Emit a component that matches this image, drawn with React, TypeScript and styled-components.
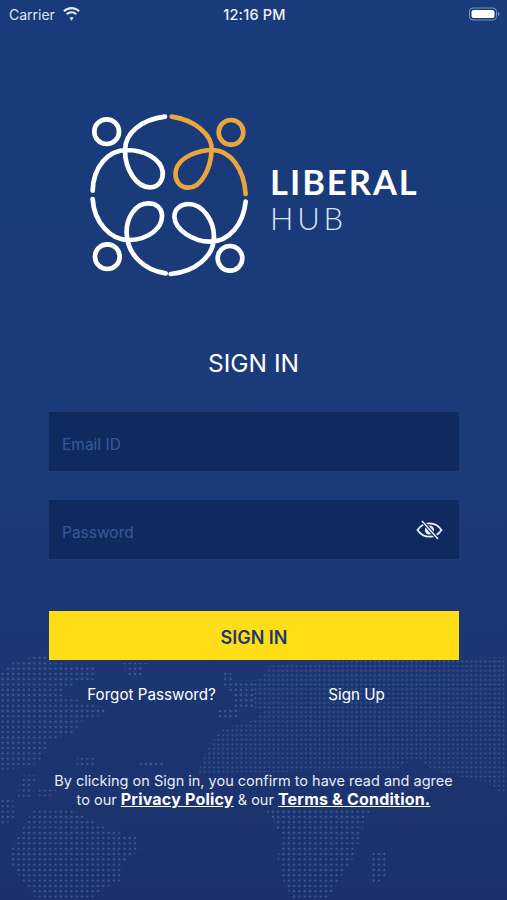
import React from 'react';
import styled, { createGlobalStyle } from 'styled-components';

const GlobalStyle = createGlobalStyle`
  html, body {
    margin: 0;
    padding: 0;
    background: #1b3672;
  }
  * {
    box-sizing: border-box;
  }
`;

const Screen = styled.div`
  position: relative;
  width: 507px;
  height: 900px;
  overflow: hidden;
  background: linear-gradient(180deg, #193b7b 0%, #1b3a78 55%, #1c316b 100%);
  font-family: Inter, 'Liberation Sans', sans-serif;
  color: #ffffff;
`;

const MapBackdrop = styled.svg`
  position: absolute;
  left: 0;
  bottom: 0;
  width: 507px;
  height: 250px;
`;

const Content = styled.div`
  position: relative;
  display: flex;
  flex-direction: column;
  height: 100%;
`;

const StatusBar = styled.div`
  display: grid;
  grid-template-columns: 1fr auto 1fr;
  align-items: center;
  height: 28px;
  padding: 0 7px 0 9px;
  font-size: 14px;
  color: #dfe6f2;
`;

const Carrier = styled.div`
  display: flex;
  align-items: center;
  gap: 7px;
`;

const Clock = styled.div`
  font-size: 14.5px;
  font-weight: 500;
  letter-spacing: 0.2px;
  color: #eef2f8;
`;

const BatteryWrap = styled.div`
  display: flex;
  justify-content: flex-end;
`;

const LogoRow = styled.div`
  display: flex;
  align-items: center;
  margin: 72px 0 0 70px;
  height: 190px;
`;

const Wordmark = styled.div`
  display: flex;
  flex-direction: column;
  padding-top: 10px;
  font-family: Lato, 'Open Sans', sans-serif;
`;

const WordmarkTop = styled.div`
  font-size: 34.5px;
  line-height: 36px;
  font-weight: 700;
  letter-spacing: 2px;
`;

const WordmarkBottom = styled.div`
  font-size: 31px;
  line-height: 36px;
  font-weight: 300;
  letter-spacing: 3.8px;
  color: #dce5f3;
`;

const Title = styled.h1`
  margin: 58px 0 0;
  font-size: 24.5px;
  line-height: 30px;
  font-weight: 400;
  text-align: center;
`;

const Form = styled.form`
  display: flex;
  flex-direction: column;
  margin: 34px 48px 0 49px;
`;

const FieldBox = styled.div<{ $gap?: number }>`
  display: flex;
  align-items: center;
  height: 59px;
  margin-top: ${({ $gap }) => $gap ?? 0}px;
  padding: 0 16px 0 13px;
  background: #0f2a5f;
`;

const FieldInput = styled.input`
  flex: 1;
  min-width: 0;
  border: 0;
  outline: 0;
  padding: 6px 0 0;
  background: transparent;
  font-family: inherit;
  font-size: 15.5px;
  color: #ffffff;

  &::placeholder {
    color: #365a9b;
    opacity: 1;
  }
`;

const SubmitButton = styled.button`
  height: 49px;
  margin-top: 52px;
  border: 0;
  padding: 3px 0 0;
  background: #ffde17;
  font-family: inherit;
  font-size: 18px;
  font-weight: 600;
  color: #1c3870;
`;

const LinkRow = styled.div`
  display: grid;
  grid-template-columns: 1fr 1fr;
  margin-top: 24px;
  font-size: 15.2px;
  line-height: 22px;
  text-align: center;
`;

const Legal = styled.p`
  margin: 66px 0 0;
  font-size: 14.5px;
  line-height: 18px;
  text-align: center;
  color: #e6ebf4;
`;

const LegalLink = styled.a`
  font-size: 16px;
  font-weight: 700;
  letter-spacing: 0.2px;
  color: #ffffff;
  text-decoration: underline;
`;

const LOOP_PATHS = [
  'M285 50C215 58 165 100 165 150C165 210 200 262 240 262C270 262 280 235 278 215C272 175 220 150 170 150C115 150 70 200 68 272',
  'M68 297C72 365 120 422 180 420C235 418 278 385 276 345C274 320 255 310 235 310C195 310 168 355 170 400C172 465 225 512 287 520',
  'M527 305C520 370 480 425 420 425C370 425 315 390 313 350C313 325 335 312 355 312C400 312 432 365 432 410C432 470 375 515 302 522',
];

const HEAD_CIRCLES = [
  { x: 110, y: 95 },
  { x: 112, y: 470 },
  { x: 480, y: 475 },
];

const Logo = () => (
  <svg width="200" height="190" viewBox="0 0 600 570" fill="none" strokeWidth="14" strokeLinecap="round">
    {LOOP_PATHS.map((d) => (
      <path key={d} d={d} stroke="#ffffff" />
    ))}
    {HEAD_CIRCLES.map((c) => (
      <circle key={c.x} cx={c.x} cy={c.y} r="37" stroke="#ffffff" />
    ))}
    <path
      d="M305 50C375 60 428 105 425 150C422 205 395 263 355 263C325 263 312 235 318 210C328 170 385 150 430 150C480 152 522 205 527 282"
      stroke="#eaa63c"
    />
    <circle cx="483" cy="97" r="37" stroke="#eaa63c" />
  </svg>
);

const WifiIcon = () => (
  <svg width="19" height="14" viewBox="0 0 19 14" fill="#e6ebf4">
    <path d="M9.5 2.2c2.6 0 5 1 6.9 2.8l1.4-1.5A12 12 0 0 0 9.5 0 12 12 0 0 0 1.2 3.500L2.600 5A10 10 0 0 1 9.500 2.200z" />
    <path d="M9.500 6.300c1.500 0 2.900.6 4 1.600l1.500-1.500a8 8 0 0 0-11 0l1.500 1.500a5.800 5.800 0 0 1 4-1.600z" />
    <path d="M9.500 10c-.8 0-1.500.3-2 .8l2 2.900 2-2.900c-.5-.5-1.200-.8-2-.8z" />
  </svg>
);

const BatteryIcon = () => (
  <svg width="31" height="14" viewBox="0 0 31 14" fill="none">
    <rect x="0.500" y="1" width="27" height="12" rx="3.500" stroke="#7f93b8" />
    <rect x="2.500" y="3" width="23" height="8" rx="2" fill="#ffffff" />
    <path d="M29 5v4c.9-.3 1.500-1.100 1.500-2S29.900 5.300 29 5z" fill="#7f93b8" />
  </svg>
);

const EyeOffIcon = () => (
  <svg width="27" height="20" viewBox="0 0 27 20" fill="none" stroke="#eef2f8">
    <path d="M1.500 10C4.500 5.500 8.500 3.300 13.500 3.300S22.500 5.500 25.500 10C22.500 14.500 18.500 16.700 13.500 16.700S4.500 14.500 1.500 10z" strokeWidth="1.800" />
    <circle cx="13.500" cy="10" r="4.600" fill="#eef2f8" stroke="none" />
    <path d="M6.500 1.500L21.500 18.500" stroke="#0f2a5f" strokeWidth="3.600" />
    <path d="M6 1L22 19" strokeWidth="1.500" />
  </svg>
);

// rough continent outlines, the dots only show inside them
const LAND_SPARSE = [
  '0,23 13,13 33,7 47,3 50,13 97,15 93,30 77,33 57,43 100,57 110,63 83,70 73,83 50,90 43,107 30,117 0,120',
  '123,13 147,13 140,27 128,27',
  '20,125 37,125 30,147 18,147',
  '77,108 97,108 93,118 77,118',
  '140,111 165,111 165,116 140,116',
  '0,147 13,150 15,170 0,175',
  '37,140 57,140 50,146 37,146',
  '33,160 72,160 110,180 137,187 140,200 123,213 123,230 100,240 90,250 37,250 10,213 10,200 20,183',
  '264,157 374,160 364,170 361,187 354,207 337,233 327,250 294,250 284,233 277,207 284,190 274,173',
  '371,203 388,200 386,225 376,235 372,235',
  '223,20 230,20 233,30 254,30 254,57 235,57 233,45 223,35',
  '218,60 240,60 240,68 218,68',
];

const LAND_DENSE = [
  '271,13 507,7 507,147 487,133 461,127 427,117 414,107 397,120 197,123 207,100 220,80 254,70 262,60 254,57 254,30 262,28',
];

const MapDots = () => (
  <MapBackdrop viewBox="0 0 507 250">
    <defs>
      <pattern id="dotsSparse" width="5.300" height="5.300" patternUnits="userSpaceOnUse">
        <circle cx="2.600" cy="2.600" r="1.150" fill="#7f9bd0" fillOpacity="0.38" />
      </pattern>
      <pattern id="dotsDense" width="4.600" height="4.600" patternUnits="userSpaceOnUse">
        <circle cx="2.300" cy="2.300" r="1" fill="#7f9bd0" fillOpacity="0.36" />
      </pattern>
      <clipPath id="landSparse">
        {LAND_SPARSE.map((points) => (
          <polygon key={points} points={points} />
        ))}
      </clipPath>
      <clipPath id="landDense">
        {LAND_DENSE.map((points) => (
          <polygon key={points} points={points} />
        ))}
      </clipPath>
    </defs>
    <rect width="507" height="250" fill="url(#dotsSparse)" clipPath="url(#landSparse)" />
    <rect width="507" height="250" fill="url(#dotsDense)" clipPath="url(#landDense)" />
  </MapBackdrop>
);

export default function App() {
  return (
    <Screen>
      <GlobalStyle />
      <MapDots />
      <Content>
        <StatusBar>
          <Carrier>
            Carrier
            <WifiIcon />
          </Carrier>
          <Clock>12:16 PM</Clock>
          <BatteryWrap>
            <BatteryIcon />
          </BatteryWrap>
        </StatusBar>
        <LogoRow>
          <Logo />
          <Wordmark>
            <WordmarkTop>LIBERAL</WordmarkTop>
            <WordmarkBottom>HUB</WordmarkBottom>
          </Wordmark>
        </LogoRow>
        <Title>SIGN IN</Title>
        <Form onSubmit={(e) => e.preventDefault()}>
          <FieldBox>
            <FieldInput placeholder="Email ID" />
          </FieldBox>
          <FieldBox $gap={29}>
            <FieldInput type="password" placeholder="Password" />
            <EyeOffIcon />
          </FieldBox>
          <SubmitButton type="submit">SIGN IN</SubmitButton>
          <LinkRow>
            <div>Forgot Password?</div>
            <div>Sign Up</div>
          </LinkRow>
        </Form>
        <Legal>
          By clicking on Sign in, you confirm to have read and agree
          <br />
          to our <LegalLink href="#">Privacy Policy</LegalLink> &amp; our{' '}
          <LegalLink href="#">Terms &amp; Condition.</LegalLink>
        </Legal>
      </Content>
    </Screen>
  );
}
